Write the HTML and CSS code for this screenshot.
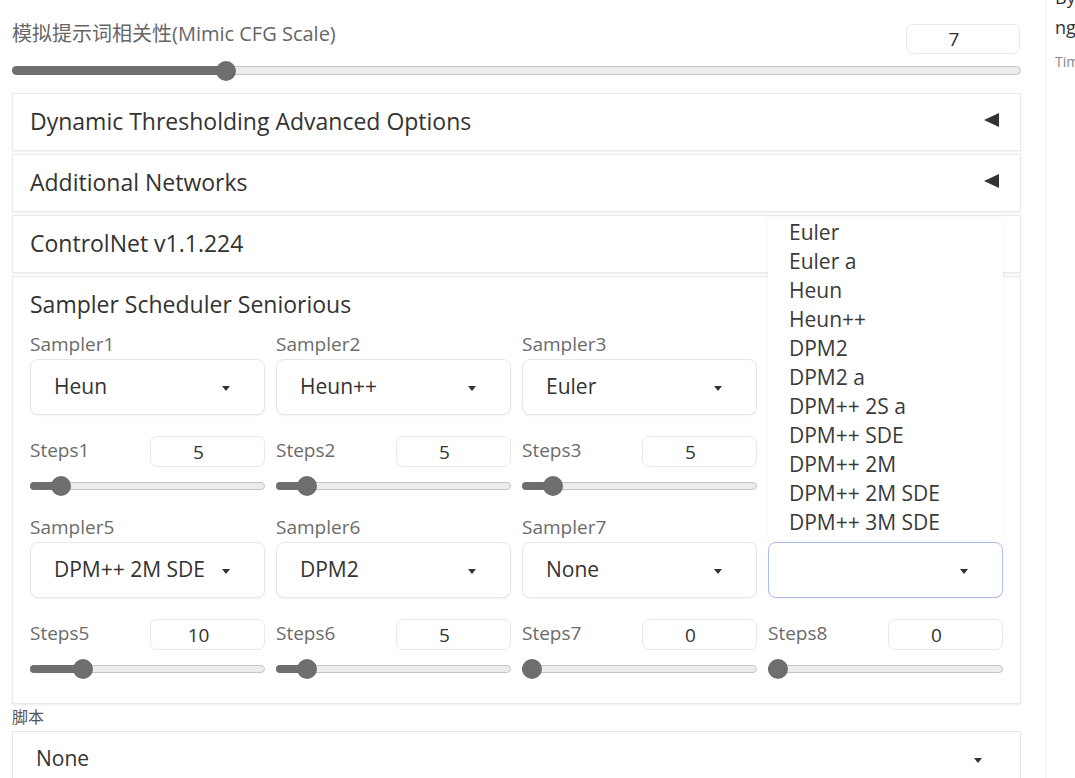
FILE: index.html
```html
<!DOCTYPE html>
<html lang="zh">
<head>
<meta charset="utf-8">
<title>Sampler Scheduler</title>
<link rel="stylesheet" href="styles.css">
</head>
<body>
<div class="page">
  <main class="main">
    <section class="cfg">
      <div class="cfg-head">
        <span class="cfg-label">模拟提示词相关性(Mimic CFG Scale)</span>
        <div class="num num-cfg">7</div>
      </div>
      <div class="slider slider-cfg" style="--p:0.2069"><div class="fill"></div><div class="thumb"></div></div>
    </section>

    <section class="accs">
      <div class="acc"><span class="acc-title">Dynamic Thresholding Advanced Options</span><span class="tri"></span></div>
      <div class="acc"><span class="acc-title">Additional Networks</span><span class="tri"></span></div>
      <div class="acc"><span class="acc-title">ControlNet v1.1.224</span><span class="tri"></span></div>
      <div class="acc acc-open">
        <div class="acc-title">Sampler Scheduler Seniorious</div>
        <div class="grid">
          <div class="col">
            <div class="lbl">Sampler1</div>
            <div class="dd"><span>Heun</span><span class="caret"></span></div>
            <div class="steps"><span class="lbl-s">Steps1</span><div class="num">5</div></div>
            <div class="slider" style="--p:0.1"><div class="fill"></div><div class="thumb"></div></div>
          </div>
          <div class="col">
            <div class="lbl">Sampler2</div>
            <div class="dd"><span>Heun++</span><span class="caret"></span></div>
            <div class="steps"><span class="lbl-s">Steps2</span><div class="num">5</div></div>
            <div class="slider" style="--p:0.1"><div class="fill"></div><div class="thumb"></div></div>
          </div>
          <div class="col">
            <div class="lbl">Sampler3</div>
            <div class="dd"><span>Euler</span><span class="caret"></span></div>
            <div class="steps"><span class="lbl-s">Steps3</span><div class="num">5</div></div>
            <div class="slider" style="--p:0.1"><div class="fill"></div><div class="thumb"></div></div>
          </div>
          <div class="col covered">
            <div class="lbl">Sampler4</div>
            <div class="dd"><span>Euler a</span><span class="caret"></span></div>
            <div class="steps"><span class="lbl-s">Steps4</span><div class="num">5</div></div>
            <div class="slider" style="--p:0.1"><div class="fill"></div><div class="thumb"></div></div>
          </div>
          <div class="col">
            <div class="lbl">Sampler5</div>
            <div class="dd"><span>DPM++ 2M SDE</span><span class="caret"></span></div>
            <div class="steps"><span class="lbl-s">Steps5</span><div class="num">10</div></div>
            <div class="slider" style="--p:0.2"><div class="fill"></div><div class="thumb"></div></div>
          </div>
          <div class="col">
            <div class="lbl">Sampler6</div>
            <div class="dd"><span>DPM2</span><span class="caret"></span></div>
            <div class="steps"><span class="lbl-s">Steps6</span><div class="num">5</div></div>
            <div class="slider" style="--p:0.1"><div class="fill"></div><div class="thumb"></div></div>
          </div>
          <div class="col">
            <div class="lbl">Sampler7</div>
            <div class="dd"><span>None</span><span class="caret"></span></div>
            <div class="steps"><span class="lbl-s">Steps7</span><div class="num">0</div></div>
            <div class="slider" style="--p:0"><div class="fill"></div><div class="thumb"></div></div>
          </div>
          <div class="col">
            <div class="lbl covered">Sampler8</div>
            <div class="dd dd-focus">
              <span></span><span class="caret"></span>
              <ul class="list">
                <li>Euler</li>
                <li>Euler a</li>
                <li>Heun</li>
                <li>Heun++</li>
                <li>DPM2</li>
                <li>DPM2 a</li>
                <li>DPM++ 2S a</li>
                <li>DPM++ SDE</li>
                <li>DPM++ 2M</li>
                <li>DPM++ 2M SDE</li>
                <li>DPM++ 3M SDE</li>
              </ul>
            </div>
            <div class="steps"><span class="lbl-s">Steps8</span><div class="num">0</div></div>
            <div class="slider" style="--p:0"><div class="fill"></div><div class="thumb"></div></div>
          </div>
        </div>
      </div>
    </section>

    <div class="script-label">脚本</div>
    <div class="dd script-dd"><span>None</span><span class="caret"></span></div>
  </main>

  <aside class="side">
    <div class="side-line">By clicking generate</div>
    <div class="side-line">ng settings applied</div>
    <div class="side-small">Time taken: 12.4s</div>
  </aside>
</div>
</body>
</html>
```

FILE: styles.css
```css
html, body {
  margin: 0;
  padding: 0;
  background: #ffffff;
  overflow: hidden;
}

body {
  font-family: "Open Sans", "Noto Sans CJK SC", sans-serif;
  color: #333333;
}

.page {
  display: flex;
  width: 1075px;
  height: 778px;
}

.main {
  width: 1009px;
  margin-left: 12px;
  padding-top: 24px;
  flex-shrink: 0;
}

/* CFG block */
.cfg-head {
  display: flex;
  align-items: flex-start;
  justify-content: space-between;
  height: 30px;
}

.cfg-label {
  font-size: 20px;
  line-height: 22px;
  margin-top: -1px;
  color: #666666;
}

.num {
  width: 115px;
  height: 31px;
  box-sizing: border-box;
  border: 1px solid #e9e9e9;
  border-radius: 7px;
  display: flex;
  align-items: center;
  justify-content: center;
  padding-right: 18px;
  font-size: 19px;
  color: #333333;
  background: #ffffff;
}

.num-cfg {
  width: 114px;
  height: 30px;
  margin-right: 1px;
}

/* sliders */
.slider {
  position: relative;
  height: 8px;
  box-sizing: border-box;
  border: 1px solid #c6c6c6;
  border-radius: 5px;
  background: #ececec;
}

.slider-cfg {
  margin-top: 12px;
  height: 9px;
}

.fill {
  position: absolute;
  left: -1px;
  top: -1px;
  bottom: -1px;
  width: calc(var(--p) * (100% - 20px) + 12px);
  background: #6e6e6e;
  border-radius: 5px;
}

.thumb {
  position: absolute;
  top: 50%;
  left: calc(var(--p) * (100% - 20px) - 1px);
  width: 20px;
  height: 20px;
  margin-top: -10px;
  border-radius: 50%;
  background: #6e6e6e;
}

/* accordions */
.accs {
  margin-top: 18px;
  display: flex;
  flex-direction: column;
  gap: 3px;
}

.acc {
  box-sizing: border-box;
  height: 58px;
  border: 1px solid #eaeaea;
  box-shadow: 0 1px 2px rgba(0, 0, 0, 0.08);
  background: #ffffff;
  padding: 11px 21px 13px 17px;
  display: flex;
  align-items: center;
  justify-content: space-between;
}

.acc-title {
  font-size: 23px;
  line-height: 30px;
  color: #333333;
}

.tri {
  width: 0;
  height: 0;
  border-top: 7.5px solid transparent;
  border-bottom: 7.5px solid transparent;
  border-right: 15px solid #333333;
  margin-top: -2px;
}

.acc-open {
  display: block;
  height: auto;
  padding: 12px 17px 30px 17px;
}

.grid {
  margin-top: 12px;
  display: grid;
  grid-template-columns: repeat(4, 1fr);
  column-gap: 11px;
  row-gap: 24px;
}

.col {
  display: flex;
  flex-direction: column;
  min-width: 0;
}

.covered {
  visibility: hidden;
}

.lbl {
  font-size: 19px;
  line-height: 26px;
  height: 26px;
  margin-bottom: 2px;
  color: #6b6b6b;
}

.dd {
  position: relative;
  box-sizing: border-box;
  height: 56px;
  border: 1px solid #e7e7e7;
  border-radius: 8px;
  box-shadow: 0 1px 2px rgba(0, 0, 0, 0.05);
  background: #ffffff;
  display: flex;
  align-items: center;
  justify-content: space-between;
  padding: 0 34px 0 23px;
  font-size: 21px;
  color: #333333;
  white-space: nowrap;
}

.dd > span:first-child {
  margin-top: -3px;
}

.dd-focus {
  border-color: #a9bcec;
}

.caret {
  width: 0;
  height: 0;
  border-left: 4.5px solid transparent;
  border-right: 4.5px solid transparent;
  border-top: 5px solid #333333;
  margin-top: 3px;
}

.steps {
  margin-top: 21px;
  height: 31px;
  display: flex;
  align-items: center;
  justify-content: space-between;
}

.lbl-s {
  font-size: 19px;
  color: #6b6b6b;
  margin-top: -4px;
}

.col .slider {
  margin-top: 15px;
}

/* options list overlay */
.list {
  position: absolute;
  left: -1px;
  right: -1px;
  bottom: calc(100% + 3px);
  margin: 0;
  padding: 0 0 3px 21px;
  list-style: none;
  background: #ffffff;
  box-shadow: 0 0 6px rgba(0, 0, 0, 0.05);
  z-index: 5;
  visibility: visible;
}

.list li {
  font-size: 21px;
  line-height: 29px;
  color: #3a3a3a;
}

/* script */
.script-label {
  margin-top: 3px;
  font-size: 16px;
  line-height: 20px;
  color: #555555;
}

.script-dd {
  margin-top: 4px;
  border-radius: 0;
  padding-right: 38px;
}

/* side column */
.side {
  flex-shrink: 0;
  width: 300px;
  margin-left: 24px;
  margin-top: -18px;
  padding-left: 9px;
  border-left: 1px solid #f2f2f2;
  white-space: nowrap;
}

.side-line {
  font-size: 18px;
  line-height: 30px;
  color: #333333;
}

.side-small {
  margin-top: 10px;
  font-size: 14px;
  line-height: 20px;
  color: #888888;
}
```
